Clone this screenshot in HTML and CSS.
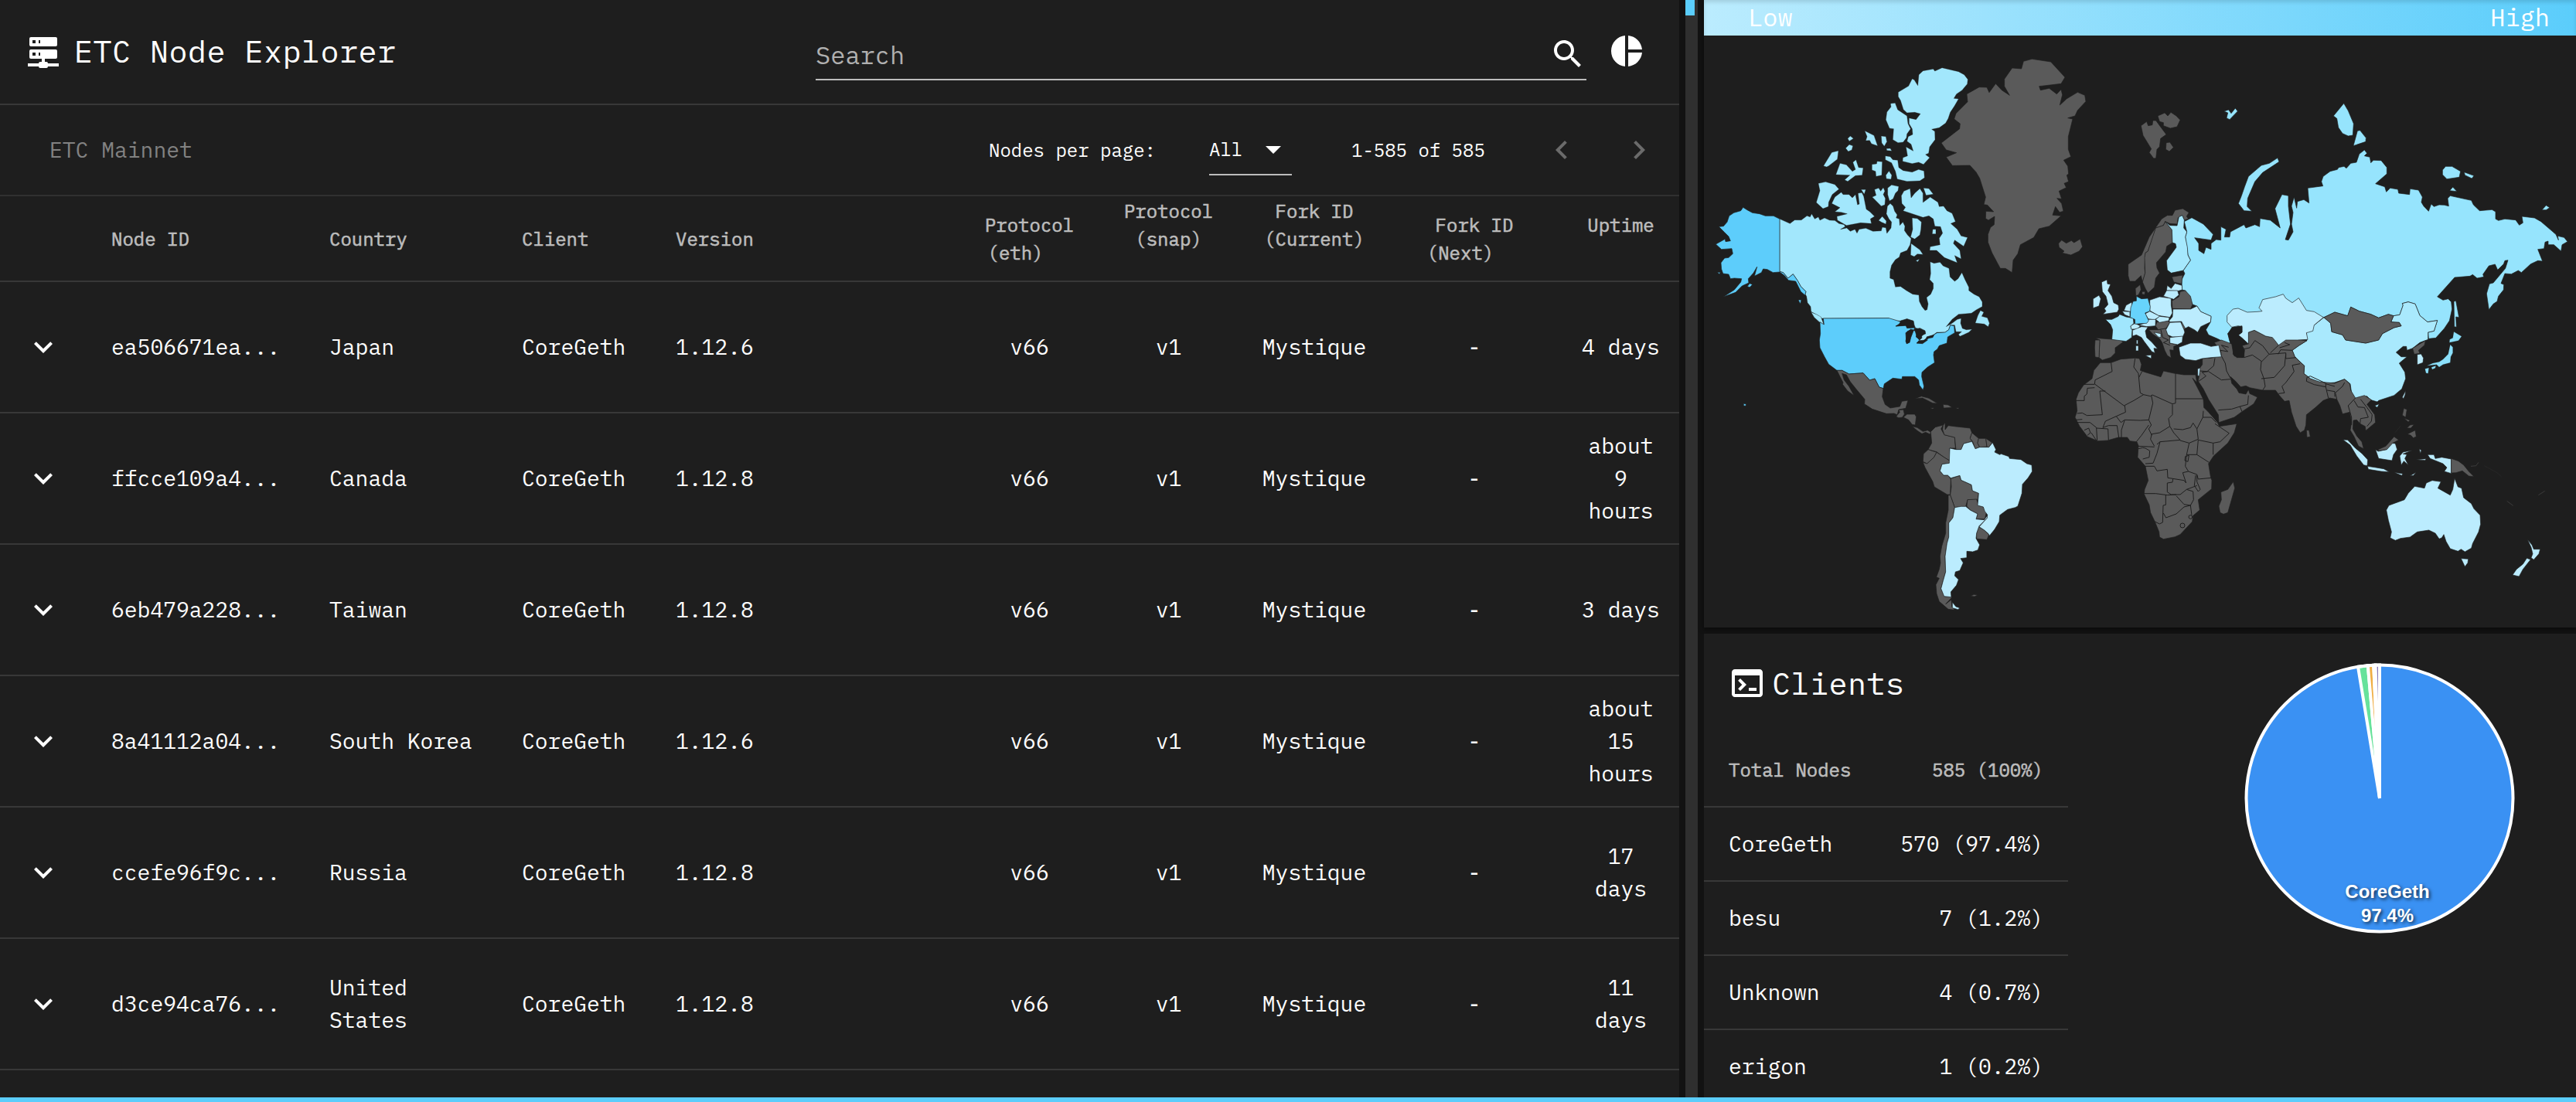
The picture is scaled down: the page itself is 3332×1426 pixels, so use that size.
FILE: index.html
```html
<!DOCTYPE html>
<html lang="en">
<head>
<meta charset="utf-8">
<title>ETC Node Explorer</title>
<link rel="stylesheet" href="styles.css">
</head>
<body>
<div class="app">
<main class="explorer">
  <header class="toolbar">
    <svg class="icon" viewBox="0 0 24 24"><path d="M13,19H14A1,1 0 0,1 15,20H22V22H15A1,1 0 0,1 14,23H10A1,1 0 0,1 9,22H2V20H9A1,1 0 0,1 10,19H11V17H4A1,1 0 0,1 3,16V12A1,1 0 0,1 4,11H20A1,1 0 0,1 21,12V16A1,1 0 0,1 20,17H13V19M4,3H20A1,1 0 0,1 21,4V8A1,1 0 0,1 20,9H4A1,1 0 0,1 3,8V4A1,1 0 0,1 4,3M9,7H10V5H9V7M9,15H10V13H9V15M5,5V7H7V5H5M5,13V15H7V13H5Z"/></svg>
    <h1 class="title">ETC Node Explorer</h1>
    <div class="search"><span>Search</span>
      <svg class="icon" viewBox="0 0 24 24"><path d="M15.5 14h-.79l-.28-.27C15.41 12.59 16 11.11 16 9.5 16 5.91 13.09 3 9.5 3S3 5.91 3 9.5 5.91 16 9.5 16c1.61 0 3.09-.59 4.23-1.57l.27.28v.79l5 4.99L20.49 19l-4.99-5zm-6 0C7.01 14 5 11.99 5 9.5S7.01 5 9.5 5 14 7.01 14 9.5 11.99 14 9.5 14z"/></svg>
    </div>
    <svg class="icon" viewBox="0 0 24 24"><path d="M11 2v20c-5.07-.5-9-4.79-9-10s3.93-9.5 9-10zm2.03 0v8.99H22c-.47-4.74-4.24-8.52-8.97-8.99zm0 11.01V22c4.74-.47 8.5-4.25 8.97-8.99h-8.97z"/></svg>
  </header>
  <div class="pager">
    <span class="network">ETC Mainnet</span>
    <span class="pager-label">Nodes per page:</span>
    <span class="select">All<svg class="icon" viewBox="0 0 24 24"><path d="M7 10l5 5 5-5z"/></svg></span>
    <span class="range">1-585 of 585</span>
    <svg class="icon disabled" viewBox="0 0 24 24"><path d="M15.41 16.59L10.83 12l4.58-4.59L14 6l-6 6 6 6 1.41-1.41z"/></svg>
    <svg class="icon disabled next" viewBox="0 0 24 24"><path d="M8.59 16.59L13.17 12 8.59 7.41 10 6l6 6-6 6-1.41-1.41z"/></svg>
  </div>
  <div class="row head">
    <span></span><span>Node ID</span><span>Country</span><span>Client</span><span>Version</span>
    <span class="mid">Protocol<br><i class="nudge">(eth)</i></span><span class="mid lift">Protocol<br>(snap)</span><span class="mid lift">Fork ID<br>(Current)</span><span class="mid">Fork ID<br><i class="nudge">(Next)</i></span><span class="mid lift">Uptime</span>
  </div>
  <div class="row"><svg class="icon chev" viewBox="0 0 24 24"><path d="M16.59 8.59L12 13.17 7.41 8.59 6 10l6 6 6-6z"/></svg><span>ea506671ea...</span><span>Japan</span><span>CoreGeth</span><span>1.12.6</span><span class="mid">v66</span><span class="mid">v1</span><span class="mid">Mystique</span><span class="mid">-</span><span class="mid">4 days</span></div>
  <div class="row"><svg class="icon chev" viewBox="0 0 24 24"><path d="M16.59 8.59L12 13.17 7.41 8.59 6 10l6 6 6-6z"/></svg><span>ffcce109a4...</span><span>Canada</span><span>CoreGeth</span><span>1.12.8</span><span class="mid">v66</span><span class="mid">v1</span><span class="mid">Mystique</span><span class="mid">-</span><span class="mid">about<br>9<br>hours</span></div>
  <div class="row"><svg class="icon chev" viewBox="0 0 24 24"><path d="M16.59 8.59L12 13.17 7.41 8.59 6 10l6 6 6-6z"/></svg><span>6eb479a228...</span><span>Taiwan</span><span>CoreGeth</span><span>1.12.8</span><span class="mid">v66</span><span class="mid">v1</span><span class="mid">Mystique</span><span class="mid">-</span><span class="mid">3 days</span></div>
  <div class="row"><svg class="icon chev" viewBox="0 0 24 24"><path d="M16.59 8.59L12 13.17 7.41 8.59 6 10l6 6 6-6z"/></svg><span>8a41112a04...</span><span>South Korea</span><span>CoreGeth</span><span>1.12.6</span><span class="mid">v66</span><span class="mid">v1</span><span class="mid">Mystique</span><span class="mid">-</span><span class="mid">about<br>15<br>hours</span></div>
  <div class="row"><svg class="icon chev" viewBox="0 0 24 24"><path d="M16.59 8.59L12 13.17 7.41 8.59 6 10l6 6 6-6z"/></svg><span>ccefe96f9c...</span><span>Russia</span><span>CoreGeth</span><span>1.12.8</span><span class="mid">v66</span><span class="mid">v1</span><span class="mid">Mystique</span><span class="mid">-</span><span class="mid">17<br>days</span></div>
  <div class="row"><svg class="icon chev" viewBox="0 0 24 24"><path d="M16.59 8.59L12 13.17 7.41 8.59 6 10l6 6 6-6z"/></svg><span>d3ce94ca76...</span><span>United<br>States</span><span>CoreGeth</span><span>1.12.8</span><span class="mid">v66</span><span class="mid">v1</span><span class="mid">Mystique</span><span class="mid">-</span><span class="mid">11<br>days</span></div>
</main>
<div class="scroll"><div class="thumb"></div></div>
<aside class="side">
  <section class="card map">
    <div class="scale"><span>Low</span><span>High</span></div>
    <svg class="world" viewBox="2204 46 1128 766">
      <!-- Russia and East Asia -->
      <g transform="translate(2980 120) scale(.33333)">
        <g class="ru">
        <polygon points="78,872 120,852 170,866 182,832 215,848 260,860 290,874 328,860 348,866 372,862 385,825 382,818 405,812 432,820 450,865 480,890 518,884 505,925 482,930 484,955 512,952 545,915 565,885 575,840 572,812 560,800 540,805 518,792 585,717 645,712 655,706 672,720 698,715 695,705 718,672 742,666 752,688 775,665 780,652 792,650 782,682 735,738 720,742 709,780 718,842 735,820 750,810 755,790 775,765 776,745 765,740 780,702 805,704 832,690 844,698 880,665 908,652 926,654 908,608 932,605 936,580 948,576 948,590 970,590 998,615 1002,590 1023,578 1010,562 985,556 988,572 978,550 920,500 895,486 846,480 850,505 836,514 822,494 780,490 755,496 744,490 744,462 730,454 682,458 658,435 650,418 568,400 558,410 562,440 545,436 525,435 505,442 494,432 484,460 465,440 456,425 460,405 445,378 412,373 410,395 368,390 365,375 335,370 320,385 314,365 278,353 322,315 322,290 300,263 270,262 260,272 256,250 235,245 245,235 235,222 215,238 204,270 182,274 165,293 156,286 135,290 130,298 102,305 75,325 68,345 74,362 15,370 20,428 0,415 -25,422 -28,448 -38,405 -48,440 -42,465 -48,510 -42,540 -60,572 -72,570 -52,510 -60,440 -60,400 -85,395 -112,450 -92,525 -130,495 -170,488 -172,520 -190,512 -225,525 -232,512 -285,540 -288,560 -308,560 -302,530 -322,520 -322,572 -340,570 -360,585 -360,608 -380,600 -388,625 -408,612 -408,585 -424,563 -360,572 -352,550 -390,510 -435,485 -464,500 -454,540 -460,560 -450,630 -440,650 -468,690 -462,702 -474,725 -473,765 -460,768 -432,822 -415,828 -400,850 -360,868 -362,890 -380,920 -370,940 -335,955 -290,978 -285,965 -295,935 -278,910"/>
        <polygon points="115,90 155,41 172,70 193,120 190,165 172,168 150,158 134,135 128,100"/><polygon points="192,206 208,148 218,146 241,175 240,190"/><polygon points="538,300 550,286 575,286 608,305 603,328 555,335 538,318"/><polygon points="622,308 660,322 652,333 625,320"/><polygon points="566,380 578,366 594,383"/><polygon points="924,455 940,437 954,446 940,455"/><polygon points="582,810 590,808 602,872 590,870 592,910 584,908"/>
        </g>
        <g class="cn">
        <polygon points="78,872 104,895 108,928 150,940 162,960 240,972 290,960 305,935 350,912 378,905 370,892 338,890 348,866 372,862 385,825 382,818 405,812 432,820 450,865 480,890 518,884 505,925 482,930 482,958 450,970 422,992 400,1000 398,985 385,985 358,1008 378,1025 400,1025 370,1050 392,1085 395,1110 380,1150 350,1175 290,1195 285,1200 258,1192 245,1178 215,1183 200,1188 185,1165 180,1130 158,1112 120,1125 85,1128 60,1125 25,1110 0,1090 2,1060 -35,1025 -45,1000 -20,982 12,962 10,932 40,902"/><polygon points="275,1215 292,1208 285,1222"/>
        </g>
        <g class="jp"><polygon points="582,928 612,946 600,962 565,970 566,958 578,952"/><polygon points="568,978 578,988 578,1010 570,1025 568,1048 540,1055 525,1065 515,1055 478,1060 500,1050 525,1045 540,1035 560,1015"/><polygon points="470,1072 485,1068 482,1090 474,1088"/><polygon points="495,1066 512,1060 510,1069 498,1074"/></g>
        <polygon class="few" points="440,1016 455,1014 464,1030 462,1048 440,1056"/><polygon class="few" points="382,1182 395,1156 393,1172 387,1187"/>
        <polygon class="no" points="422,992 450,975 472,962 468,980 445,1000 450,1012 428,1015"/>
        <polygon class="no" points="78,872 120,852 170,866 182,832 215,848 260,860 290,874 328,860 348,866 338,890 370,892 378,905 350,912 305,935 290,960 240,972 162,960 150,940 108,928 104,895"/>
      </g>
      <!-- Africa, Middle East, South Asia -->
      <g transform="translate(2660 440) scale(.33333)">
        <g class="no">
        <polygon points="566,72 600,70 640,62 637,40 612,10 640,0 680,15 686,50 690,62 728,68 728,35 718,22 745,15 745,-30 768,-38 812,-15 840,-10 862,20 895,-5 972,2 940,22 915,40 925,65 945,85 962,100 960,130 985,150 1020,162 1080,168 1118,152 1138,170 1142,195 1160,225 1195,215 1222,232 1205,250 1235,290 1238,320 1200,352 1198,335 1178,325 1165,310 1152,312 1150,345 1165,372 1185,395 1192,422 1172,412 1155,375 1140,350 1145,320 1138,280 1110,287 1100,255 1088,230 1060,225 1035,235 1005,262 970,290 968,330 962,350 946,360 930,335 912,280 903,235 885,238 865,215 850,195 800,195 750,185 735,178 715,182 695,160 675,142 680,168 700,190 708,205 735,210 745,192 750,208 780,222 765,248 720,278 690,300 630,320 628,290 590,230 570,190 550,160 555,130 552,115 566,95"/>
        <polygon points="170,88 212,88 250,74 305,70 322,72 330,95 325,118 345,125 405,143 415,120 460,130 495,135 540,135 545,165 528,148 555,200 570,230 572,262 590,280 612,305 625,320 632,335 700,325 690,360 665,400 610,450 590,480 598,530 603,545 602,578 550,620 556,660 530,682 527,705 480,755 460,764 415,773 400,765 398,745 382,705 365,670 360,640 340,598 342,580 356,545 345,490 315,455 318,410 312,395 285,392 275,378 240,378 198,390 160,392 120,375 90,335 72,300 80,275 76,230 85,205 105,175 138,150 145,118"/>
        <polygon points="686,550 692,575 665,670 648,676 635,670 630,645 640,620 638,590 665,580"/><polygon points="970,350 980,350 985,375 972,378"/>
        </g>
        <g class="line">
        <polyline points="640,62 655,90 660,120 675,148"/><polyline points="552,160 580,140 565,125 590,122 640,155 675,152"/><polyline points="615,70 610,100 585,122 556,120"/><polyline points="728,68 760,58 795,82 792,115 805,150 810,180 800,195"/><polyline points="795,150 845,145 885,100 890,55"/><polyline points="728,35 750,30 770,2 800,22 825,55 795,85"/><polyline points="825,55 890,50 890,72 930,68"/><polyline points="862,20 830,50"/><polyline points="745,15 745,-30"/><polyline points="915,40 870,38 860,55"/><polyline points="866,30 905,18 885,10"/><polyline points="945,92 915,98 922,122 890,165 875,180 885,205 862,208"/><polygon points="972,145 985,140 1045,168 1045,182 1000,173 970,160"/><polyline points="1045,182 1055,225"/><polyline points="1045,170 1080,180"/><polyline points="628,272 680,268 712,258 742,250 745,215"/><polyline points="712,258 720,278"/><polyline points="1160,225 1132,255 1145,300 1145,330"/><polyline points="1155,235 1170,260 1195,262 1210,300 1180,305 1178,325"/><polyline points="1180,230 1205,262 1225,290 1222,315 1205,335"/><polyline points="1088,230 1082,205 1110,180 1118,165"/><polyline points="1050,195 1080,200 1080,220"/><polyline points="637,40 665,45 640,20 668,28"/>
        <polyline points="212,88 216,122 180,140 150,155 148,172 105,172"/><polyline points="150,172 262,255 300,235 338,212 325,205 318,130 300,105 305,72"/><polyline points="320,145 332,122"/><polyline points="338,212 365,218 372,213 450,248 462,245 462,130"/><polyline points="462,228 570,228"/><polyline points="148,185 120,187 118,210 108,218 108,235 76,235"/><polyline points="190,198 168,198 178,290 118,293 100,283 80,285"/><polyline points="265,255 268,280 232,296 190,315 180,340"/><polyline points="368,215 374,245 358,310 325,312 265,310 250,320 232,296"/><polyline points="450,250 450,290 435,305 440,335"/><polyline points="358,310 368,330 358,345 370,370"/><polyline points="380,412 365,385 370,365 400,360 440,335 455,360 480,388 402,395 390,405"/><polyline points="310,395 330,370 358,330"/><polyline points="455,345 490,348 520,340 530,322 545,345 550,385 515,400 480,390"/><polyline points="545,345 568,300 600,300 620,320"/><polyline points="570,275 568,300"/><polyline points="615,325 630,335 670,362 635,395 608,400 550,388"/><polyline points="608,400 608,445"/><polyline points="550,388 545,445 592,475"/><polyline points="515,400 505,445 545,445"/><polyline points="505,445 500,490 512,510 545,522 550,540 600,535"/><polygon points="500,452 514,448 510,472 498,468"/><polyline points="402,395 390,440 375,478 345,480"/><polyline points="318,412 380,415"/><polyline points="318,422 335,418 345,420 362,430 360,455 335,462"/><polyline points="345,490 380,490 390,508 430,502 432,535 495,545 503,555 490,515 512,510"/><polyline points="540,525 535,565 550,588 558,580 545,550 545,525"/><polyline points="452,540 450,552 430,555 430,590 445,600 480,600 505,580 545,565"/><polyline points="340,596 385,596 430,602 465,600"/><polyline points="424,602 424,640 414,642 412,708 400,714 382,705"/><polyline points="415,672 425,690 465,675 495,648 520,642 525,680"/><polyline points="465,605 495,638 520,642 532,620 530,588 505,580"/><circle cx="489" cy="720" r="9"/><circle cx="520" cy="687" r="7"/><polyline points="80,320 130,320 155,340 158,390"/><polyline points="108,350 125,342 132,360 120,370"/><polyline points="135,360 155,390"/><polyline points="155,342 200,345 202,388"/><polyline points="180,340 202,332 235,332 242,378"/><polyline points="265,310 252,350 252,378"/><polyline points="75,310 100,308"/>
        </g>
      </g>
      <!-- Europe -->
      <g transform="translate(2660 240) scale(.33333)">
        <g class="no"><polygon points="284,372 278,350 278,306 330,270 360,200 408,130 430,116 450,116 460,96 490,90 514,105 505,120 512,130 496,134 488,116 472,125 468,150 440,148 422,140 415,155 385,165 375,200 355,255 345,262 342,320 344,340 334,375 328,350 305,372"/><polygon points="422,140 448,172 450,222 428,236 424,258 388,300 390,320 400,340 385,360 380,395 355,418 345,400 334,375 344,340 342,280 345,262 355,255 385,165 415,155"/><polygon points="306,400 325,385 328,405 318,425 308,428"/><polygon points="332,412 344,412 342,424 332,422"/><polygon points="150,592 250,600 258,608 228,630 228,650 210,668 178,678 165,668 168,600"/><polygon points="150,600 168,600 165,668 150,666 148,630"/><polygon points="384,545 390,530 430,525 440,532 425,555 395,560"/><polygon points="358,560 395,560 425,555 432,580 440,590 438,612 470,618 455,625 455,640 440,638 445,670 430,660 420,640 410,610 400,595 375,578"/><polygon points="482,530 500,540 502,555 492,560"/><polygon points="450,478 448,448 475,432 480,412 500,408 520,430 528,462 520,480"/><polygon points="448,355 490,348 485,382 455,375"/></g>
        <polyline class="line" points="405,560 412,590 435,600 415,610 440,620"/>
        <polygon class="fi" points="422,140 440,155 468,156 475,122 488,116 496,134 494,165 506,180 500,200 508,240 510,270 520,290 492,330 445,340 430,328 427,292 465,240 462,226 450,222 448,172"/>
        <polygon class="fr" points="245,500 270,510 298,515 300,535 288,548 294,560 292,590 270,605 215,598 218,560 210,540 190,520 215,520 240,508"/>
        <g class="few"><polygon points="175,375 196,366 198,382 210,384 200,408 215,430 222,455 240,464 242,480 236,492 180,500 192,488 186,478 200,462 192,430 178,412"/><polygon points="142,440 165,426 172,440 165,468 142,476"/><polygon points="270,465 292,453 295,480 285,490 262,485"/><polygon points="255,488 285,490 285,510 265,502"/><polygon points="362,445 400,432 445,438 445,465 450,495 440,512 395,505 362,486"/><polygon points="344,498 362,488 402,508 380,522 356,518"/><polygon points="340,535 355,520 385,520 384,545 350,548 320,542"/><polygon points="385,520 400,508 438,512 436,525 400,532"/><polygon points="288,545 305,535 325,545 315,558 290,558"/><polygon points="295,562 330,548 355,550 345,565 350,590 370,608 392,634 378,632 382,650 370,645 340,605 330,590 310,580 295,585"/><polygon points="345,660 368,658 368,672"/><polygon points="308,622 318,622 318,642 308,642"/><polygon points="310,600 316,600 316,616 310,614"/><polygon points="378,570 405,575 405,590 395,588"/><polygon points="425,560 440,532 482,530 495,560 498,570 490,588 450,588 432,580"/><polygon points="440,590 490,585 488,608 470,618 440,612"/><polygon points="437,525 450,510 452,480 520,480 545,468 560,490 600,508 598,530 560,548 548,570 535,560 512,548 500,555 485,528 440,530"/><polygon points="427,408 430,388 445,400 460,380 487,388 488,405 470,410"/><polygon points="427,408 470,408 475,425 455,442 432,435 415,430"/><polygon points="475,628 520,612 560,612 600,625 630,620 640,665 600,668 565,672 540,680 500,675 480,660"/><polygon points="680,550 662,530 662,505 685,480 705,477 740,492 780,490 798,488 786,475 800,443 850,432 880,422 890,438 915,455 940,437 970,485 1000,490 1036,512 1000,542 995,565 970,572 975,598 935,600 890,600 862,620 848,602 838,590 812,585 768,562 745,570 745,615 720,592 705,580 720,570 720,548 705,545"/><polygon points="548,712 558,708 554,740 548,738"/></g>
        <polygon class="de" points="310,430 330,440 355,438 364,470 362,488 344,495 358,525 350,535 305,538 304,520 286,512 288,475 297,450 310,448"/>
        <polygon class="sea" points="720,545 690,553 665,575 672,605 690,620 685,655 700,668 725,668 730,640 720,620 738,615 712,590 705,582 720,570"/>
      </g>
      <!-- Greenland, Iceland and the Arctic -->
      <g transform="translate(2480 60) scale(.33333)">
        <g class="no"><polygon points="445,49 518,60 573,120 558,145 473,155 478,170 512,163 541,185 558,167 563,188 553,228 580,203 622,178 650,190 654,214 622,248 612,270 584,278 603,282 586,350 586,400 596,428 568,442 584,465 587,495 580,500 587,525 570,532 578,548 550,562 560,592 542,590 560,610 567,640 552,644 536,622 525,655 558,658 512,698 472,708 452,742 400,770 390,805 372,830 368,878 342,862 322,862 290,802 274,760 274,730 284,703 298,692 300,660 276,675 265,668 266,640 296,642 272,616 258,614 265,585 242,512 228,488 204,462 136,463 112,430 152,413 112,402 93,375 164,320 166,300 143,282 150,260 195,215 192,185 240,158 270,159 279,179 304,145 328,170 358,190 338,155 338,127 368,84 404,87 412,58"/><polygon points="548,765 560,752 578,764 598,754 608,762 632,748 641,778 628,795 596,810 562,802 570,795 550,780"/><polygon points="868,308 890,292 896,308 912,305 914,288 926,288 966,342 944,358 940,390 930,400 926,434 917,435 900,412 908,398 876,346"/><polygon points="933,270 960,258 972,270 984,256 1005,270 1020,286 1008,312 982,318 955,308 955,296 940,292"/><polygon points="966,374 980,372 994,392 978,408 964,400"/></g>
        <g class="ru"><polygon points="1190,252 1208,246 1218,260 1234,240 1243,252 1212,284 1200,278 1205,258"/><polygon points="1398,433 1404,448 1340,490 1310,525 1282,590 1280,622 1298,640 1268,638 1246,610 1258,580 1270,545 1285,505 1335,462 1366,454"/></g>
      </g>
      <!-- Canada and Alaska -->
      <g transform="translate(2200 50) scale(.33333)">
        <g class="ca"><polygon points="306,700 346,718 364,704 390,704 412,688 424,692 430,680 442,700 456,692 462,705 480,696 500,705 520,706 536,718 556,722 560,730 542,740 566,735 580,748 598,740 606,755 614,740 640,736 668,748 700,746 704,732 718,734 722,756 738,735 740,712 730,700 720,680 724,650 735,640 746,650 752,670 762,684 758,696 770,700 772,725 784,712 792,728 790,745 802,762 816,776 812,800 800,822 775,832 770,848 755,858 740,880 734,905 734,930 748,935 755,964 775,962 798,978 822,992 846,995 848,1020 858,1040 870,1055 878,1052 882,1030 876,1005 892,992 902,970 902,950 888,935 892,912 890,866 905,872 928,868 940,882 963,892 967,925 985,942 998,932 1013,908 1025,935 1040,965 1040,978 1060,992 1080,1002 1092,1022 1092,1040 1070,1052 1050,1066 1000,1070 975,1090 952,1118 975,1105 995,1090 1010,1086 1008,1105 1015,1125 1030,1130 1052,1128 1040,1140 1005,1156 1000,1148 1012,1138 990,1138 985,1112 968,1112 962,1130 948,1140 916,1140 900,1152 880,1158 862,1174 845,1172 850,1160 870,1145 868,1135 850,1130 838,1124 828,1122 822,1102 800,1088 785,1096 760,1096 734,1090 730,1085 470,1086 455,1075 428,1060 426,1040 414,1025 410,1000 405,992 408,982 388,962 376,940 358,914 338,930 320,908 306,904"/><polygon points="428,1062 448,1070 466,1080 478,1112 460,1100 440,1082"/><polygon points="846,140 862,125 902,118 908,126 936,113 1000,128 1022,140 1036,158 1034,176 1014,200 992,215 982,232 1000,234 984,262 968,286 960,310 950,328 925,346 896,352 908,360 909,392 888,420 884,445 872,450 888,462 864,488 845,480 820,485 783,476 784,462 802,455 796,420 824,436 816,410 800,398 805,380 822,372 820,350 808,330 808,308 835,314 852,292 830,286 800,288 786,275 775,240 766,225 766,208 806,184 820,156 828,160 842,182"/><polygon points="736,252 754,250 764,276 800,300 804,330 814,350 800,370 798,385 785,402 765,404 745,392 748,350 732,348 718,315 722,285 738,265"/><polygon points="716,455 735,458 745,470 764,472 768,500 785,512 820,518 845,508 866,514 868,540 850,552 800,554 762,545 755,515 740,482 716,470"/><polygon points="636,358 672,376 686,416 662,408 655,395 640,396 645,380"/><polygon points="700,378 718,380 722,400 712,418 702,405"/><polygon points="570,388 580,378 592,388 576,398"/><polygon points="562,425 576,411 590,416 586,432 572,438"/><polygon points="720,427 735,426 741,436 722,434"/><polygon points="476,494 508,442 534,435 530,468 496,494 488,498"/><polygon points="540,484 565,490 588,515 600,508 590,480 602,470 612,500 630,502 626,530 600,532 570,554 558,548 578,530 524,528"/><polygon points="664,488 682,486 684,476 704,478 702,530 680,535 678,515 664,510"/><polygon points="730,514 741,530 738,546 720,544 718,530"/><polygon points="456,562 484,556 520,566 536,584 510,605 496,635 495,652 474,660 448,636 462,590"/><polygon points="508,640 520,615 545,596 552,605 575,605 588,618 600,605 608,645 615,642 610,600 625,598 632,612 642,662 656,672 674,690 658,700 662,718 620,715 565,725 530,705 528,690 568,680 545,674 520,672 540,656"/><polygon points="674,586 690,580 698,592 708,578 714,592 708,605 716,620 714,645 700,650 665,615 680,608"/><polygon points="622,586 640,586 634,604"/><polygon points="725,580 740,568 768,574 765,590 755,600 746,622 732,630 725,605"/><polygon points="690,706 704,690 720,708 718,720 700,712"/><polygon points="820,696 840,698 856,712 854,740 850,762 830,778 814,770 822,740"/><polygon points="778,610 788,592 812,582 816,618 830,600 850,582 862,600 862,636 890,615 920,635 925,652 942,650 955,668 975,678 988,710 970,718 995,740 1010,766 1035,772 1020,806 985,782 980,795 1005,822 1010,855 985,842 995,870 945,850 915,822 888,822 890,808 928,800 925,775 938,755 930,730 908,728 902,700 885,688 862,694 785,668 794,655 780,640"/><polygon points="864,580 885,582 902,604 874,608"/><polygon points="900,740 912,740 912,758 898,758"/><polygon points="816,795 850,820 862,838 840,836 828,846 814,840"/><polygon points="834,862 848,856 842,866"/><polygon points="1085,1055 1098,1062 1090,1078 1112,1084 1120,1105 1115,1118 1100,1108 1065,1104 1075,1075"/></g>
        <g class="us"><polygon points="306,700 282,688 250,688 228,680 200,676 180,665 164,655 155,668 128,676 110,688 102,712 88,728 70,730 92,752 108,768 115,785 96,788 94,778 58,798 80,818 120,815 124,835 108,850 92,852 78,870 80,895 86,912 108,915 115,932 130,930 158,932 155,945 130,975 88,1002 135,985 160,960 186,948 184,932 204,910 218,886 208,922 235,908 242,894 258,896 280,908 306,906 325,920 340,938 368,942 388,982 404,996 408,982 388,962 376,940 358,914 338,930 320,908 306,904"/><polygon points="180,962 190,950 200,955 190,965"/><polygon points="378,1014 390,1014 386,1030"/><polygon points="64,907 76,907 72,914"/></g>
      </g>
      <!-- United States, Latin America -->
      <g transform="translate(2200 400) scale(.33333)">
        <g class="us"><polygon points="462,50 478,60 475,36 730,35 780,50 758,66 795,62 800,74 830,72 828,80 802,86 795,125 800,134 810,125 815,95 826,82 840,90 835,108 850,118 838,132 862,130 885,112 916,92 948,90 962,80 968,62 983,65 985,92 958,108 955,132 925,142 918,155 905,165 903,178 907,208 880,225 858,245 857,262 866,300 862,314 848,295 845,275 830,262 800,262 782,262 780,272 745,268 712,290 708,308 692,303 675,270 655,276 630,248 575,252 548,238 528,238 496,214 480,185 462,150 460,120 464,95"/><polygon points="166,367 176,369 174,376 166,375"/></g>
        <g class="sea"><polygon points="756,66 770,60 776,45 800,38 825,46 828,62 832,72 815,70 795,64"/><polygon points="795,92 815,78 826,82 815,110 810,130 798,134"/><polygon points="830,78 850,74 870,84 872,96 855,98 858,112 848,120 838,108"/><polygon points="838,132 850,122 880,120 860,134"/><polygon points="876,108 905,100 900,110 876,114"/></g>
        <g class="no"><polygon points="528,238 548,238 575,252 630,248 655,276 675,270 692,303 708,308 704,340 715,370 735,384 772,378 780,358 804,354 795,385 768,390 765,400 762,410 750,405 720,406 665,388 635,368 636,350 604,312 580,282 565,255 548,250 556,275 575,300 595,336 570,318 550,292 552,285 540,262"/><polygon points="762,412 772,400 768,392 786,390 790,408 782,420 768,422 758,418"/><polygon points="786,420 800,408 830,408 836,418 832,450 820,448 806,430"/><polygon points="820,455 840,460 862,475 880,470 892,478 890,486 872,478 858,484 840,472"/><polygon points="830,348 856,338 885,346 918,366 900,365 860,345"/><polygon points="940,370 960,372 975,382 942,384"/><polygon points="888,383 906,383 900,388"/><polygon points="988,383 1002,383 998,388"/><polygon points="892,476 910,458 940,450 932,465 945,488 985,498 988,540 966,540 968,590 945,576 915,554 882,545 896,520"/><polygon points="940,452 948,440 948,468 960,452 990,456 1045,462 1052,480 1045,500 1052,514 1020,522 1010,545 990,545 985,498 945,488 938,468"/><polygon points="1052,480 1078,502 1074,520 1082,536 1065,542 1055,515 1045,502"/><polygon points="1078,502 1106,502 1110,534 1082,536 1074,520"/><polygon points="1106,502 1130,518 1118,536 1110,534"/><polygon points="882,545 915,556 905,575 878,600 862,592 864,562"/><polygon points="862,595 878,600 905,575 915,556 945,576 968,590 964,598 936,602 928,628 942,645 958,645 970,660 968,720 956,720 906,690 900,670 870,615"/><polygon points="970,658 1005,646 1010,664 1050,682 1054,705 1078,715 1074,740 1035,740 1028,766 985,770 968,722 972,690"/><polygon points="1035,740 1070,738 1078,762 1096,768 1108,790 1102,815 1068,815 1074,795 1045,780 1032,765"/><polygon points="960,722 968,722 985,770 978,810 962,830 962,885 955,910 948,960 950,1020 940,1055 932,1085 945,1115 975,1118 950,1145 972,1128 974,1155 985,1168 960,1165 925,1135 915,1105 912,1070 925,1045 914,1040 925,1010 930,985 928,960 935,920 950,870 950,830 960,780"/><polygon points="1046,1114 1060,1108 1074,1110 1062,1116"/><polygon points="1078,845 1100,858 1118,876 1110,895 1070,892 1070,870"/></g>
        <g class="few"><polygon points="966,540 990,545 1010,545 1020,522 1052,514 1065,542 1082,536 1118,536 1132,518 1145,545 1140,555 1160,565 1165,562 1195,572 1198,580 1242,584 1265,600 1284,605 1286,630 1270,655 1248,680 1246,715 1230,765 1220,770 1190,778 1160,800 1158,825 1140,855 1120,880 1116,872 1100,858 1080,845 1110,812 1112,798 1102,785 1096,768 1074,762 1078,715 1054,705 1050,682 1010,664 1005,646 970,656 958,645 942,645 928,628 936,602 964,598"/><polygon points="985,770 1010,766 1028,766 1045,780 1074,795 1068,815 1100,818 1112,800 1110,812 1080,842 1070,870 1068,890 1082,915 1075,935 1055,942 1032,940 1032,965 1008,968 1018,985 1005,1015 988,1020 985,1035 1000,1050 992,1072 970,1098 972,1118 944,1115 932,1085 940,1055 950,1020 948,960 955,910 962,885 962,830 978,810"/><polygon points="976,1138 990,1155 1005,1160 998,1166 976,1160"/></g>
      </g>
      <!-- South-East Asia and Oceania -->
      <g transform="translate(2980 440) scale(.33333)">
        <g class="few"><polygon points="152,387 170,388 200,420 225,440 248,465 246,488 232,485 205,450 180,408"/><polygon points="247,490 280,495 310,500 332,512 300,510 250,502"/><polygon points="278,425 288,432 320,425 340,400 355,402 362,425 348,445 342,468 290,460"/><polygon points="372,450 385,435 420,428 385,442 400,445 392,460 405,485 388,470 378,485"/><polygon points="448,422 456,428 452,440"/><polygon points="435,464 475,461 470,467"/><polygon points="350,514 384,519 380,526"/><polygon points="412,527 435,514 425,526"/><polygon points="480,445 505,445 510,460 535,455 572,462 572,518 545,510 555,495 540,480 510,468 490,460"/><polygon points="585,537 598,570 612,575 620,612 650,635 660,655 684,680 686,715 678,745 655,790 650,808 625,822 610,812 598,820 568,810 552,782 543,755 535,768 525,772 510,750 485,738 440,745 412,765 375,770 355,778 335,768 340,745 328,700 320,660 330,642 390,620 405,595 430,568 468,575 475,555 498,545 532,550 520,575 568,602 578,580"/><polygon points="610,848 638,850 636,865 625,880"/><polygon points="868,775 885,795 892,812 917,812 912,830 892,853 882,845 888,830 882,805"/><polygon points="865,847 880,852 850,890 835,918 810,912 825,890 850,870"/></g>
        <g class="no"><polygon points="288,425 318,412 350,375 368,388 345,400 322,425 290,430"/><polygon points="572,460 600,470 620,485 640,510 660,530 640,528 615,508 590,515 572,516"/><polygon points="388,265 400,270 395,300 382,292"/><polygon points="402,365 432,350 436,375 425,380 415,370"/><polygon points="388,303 412,312 405,318"/><polygon points="400,342 412,330 428,328 415,342"/></g>
        <g class="reef"><polyline points="648,490 668,488 678,475"/><polyline points="788,625 812,643"/><polyline points="910,602 935,586"/><polyline class="faint" points="700,488 750,515 766,530"/><polyline class="faint" points="355,358 375,334"/></g>
      </g>
    </svg>
  </section>
  <section class="card clients">
    <div class="stats">
      <h2 class="subtitle"><svg class="icon" viewBox="0 0 24 24"><path d="M20 3H4c-1.110 0-2 .9-2 2v14c0 1.100.89 2 2 2h16c1.100 0 2-.9 2-2V5c0-1.100-.89-2-2-2zm0 16H4V7h16v12zm-2-2h-5v-2h5v2zM7.500 17l-1.410-1.410L8.670 13l-2.590-2.590L7.500 9l4 4-4 4z"/></svg>Clients</h2>
      <div class="stat total"><span>Total Nodes</span><span>585 (100%)</span></div>
      <div class="stat"><span>CoreGeth</span><span>570 (97.4%)</span></div>
      <div class="stat"><span>besu</span><span>7 (1.2%)</span></div>
      <div class="stat"><span>Unknown</span><span>4 (0.7%)</span></div>
      <div class="stat"><span>erigon</span><span>1 (0.2%)</span></div>
    </div>
    <svg class="pie" viewBox="-180 -180 360 360">
      <circle r="172.500" fill="#3a91f3"/>
      <path d="M0 0L-28 -170.200A172.500 172.500 0 0 1 -15.200 -171.800Z" fill="#67e29b"/>
      <path d="M0 0L-15.200 -171.800A172.500 172.500 0 0 1 -7.800 -172.300Z" fill="#f0ad43"/>
      <path d="M0 0L-7.800 -172.300A172.500 172.500 0 0 1 -5.500 -172.400Z" fill="#f7775f"/>
      <path d="M0 0L-5.500 -172.400A172.500 172.500 0 0 1 0 -172.500Z" fill="#8878b8"/>
      <circle class="rim" r="172.500"/>
      <path class="rim" d="M0 0V-172.500"/>
      <text x="10" y="129">CoreGeth</text><text x="10" y="160">97.4%</text>
    </svg>
  </section>
</aside>
</div>
<div class="bottombar"></div>
</body>
</html>
```
FILE: styles.css
```css
* { box-sizing: border-box; }
body {
  margin: 0;
  height: 1426px;
  overflow: hidden;
  display: grid;
  grid-template-rows: 1420px 6px;
  background: #121212;
  color: #fff;
  font: 28px/42px "IBM Plex Mono", "Liberation Mono", monospace;
}
h1, h2 { margin: 0; font-weight: 400; letter-spacing: .5px; }
.app { display: grid; grid-template-columns: 2172px 8px 16px 8px 1128px; overflow: hidden; }
.bottombar { background: #5bcdfb; }
.explorer, .card { background: #1e1e1e; }
.scroll { grid-column: 3; background: #2f2f2f; }
.thumb { width: 12px; height: 20px; background: #5bcdfb; }
.icon { width: 48px; height: 48px; fill: #fff; flex: none; display: block; }

.toolbar { height: 136px; border-bottom: 2px solid #383838; display: flex; align-items: flex-start; padding: 42px 44px 0 32px; }
.title { font-size: 40px; line-height: 49px; margin-left: 16px; flex: 1; }
.search { width: 997px; height: 62px; border-bottom: 2px solid #bcbcbc; display: flex; justify-content: space-between; color: #b0b0b0; font-size: 32px; line-height: 54px; margin-right: 28px; padding-top: 2px; }
.search .icon { margin-top: 2px; }
.pager { height: 118px; border-bottom: 2px solid #303030; display: flex; align-items: center; font-size: 24px; padding-right: 28px; }
.network { font-size: 28px; color: #828282; padding-left: 64px; flex: 1; }
.select { width: 107px; height: 66px; margin: 0 77px 0 69px; border-bottom: 2px solid #bcbcbc; display: flex; align-items: center; justify-content: space-between; }
.range { width: 248px; }
.disabled { fill: #6b6b6b; }
.next { margin-left: 52px; }

.row { height: 170px; border-bottom: 2px solid #383838; display: grid; grid-template-columns: 144px 282px 249px 199px 377px 161px 199px 178px 236px 143px; align-items: center; }
.head { height: 111px; font-size: 24px; line-height: 36px; color: #bcbcbc; -webkit-text-stroke: .6px #bcbcbc; }
.mid { text-align: center; }
.lift { padding-bottom: 36px; }
.nudge { font-style: normal; margin-right: 36px; }
.chev { margin-left: 32px; }

.side { grid-column: 5; display: grid; grid-template-rows: 812px 600px; gap: 8px; }
.map { display: grid; grid-template-rows: 46px 766px; box-shadow: 0 2px 6px rgba(0,0,0,.5); }
.scale { background: linear-gradient(90deg, #bbecfe, #5bcdfb); display: flex; justify-content: space-between; padding: 0 34px 0 57px; font-size: 32px; line-height: 45px; box-shadow: inset 0 3px 5px rgba(0,0,0,.12); }
.world { width: 1128px; height: 766px; display: block; stroke: #1e1e1e; stroke-width: 2; stroke-linejoin: round; }
.no { fill: #5a5a5a; }
.few { fill: #bbecfe; }
.ca { fill: #a2e7fc; stroke-width: 1; }
.us { fill: #5dcdfb; }
.ru { fill: #96e4fd; }
.cn { fill: #a9e9fd; }
.jp { fill: #8be0fb; stroke-width: .5; }
.de { fill: #67d3fc; }
.fr { fill: #a0e6fd; }
.fi { fill: #a5e8fd; }
.sea { fill: #1e1e1e; }
.line { fill: none; stroke-width: 3; }
.reef { fill: none; stroke: #4a4a4a; }
.faint { stroke: #2c2c2c; }

.clients { display: flex; align-items: flex-start; overflow: hidden; }
.stats { width: 471px; }
.subtitle { height: 129px; padding: 40px 0 0 32px; display: flex; font-size: 40px; line-height: 48px; gap: 8px; }
.stat { height: 96px; border-bottom: 2px solid #383838; padding: 0 32px; display: flex; align-items: center; justify-content: space-between; }
.total { font-size: 24px; color: #bcbcbc; -webkit-text-stroke: .6px #bcbcbc; }
.pie { width: 360px; height: 360px; margin: 33px 0 0 223px; }
.rim { fill: none; stroke: #fff; stroke-width: 4; }
.pie path { stroke: #fff; stroke-width: 4; }
.pie text { fill: #fff; font: bold 24px "Liberation Sans", Arial, sans-serif; text-anchor: middle; text-shadow: 2px 2px 4px rgba(0,0,0,.7); }
```
